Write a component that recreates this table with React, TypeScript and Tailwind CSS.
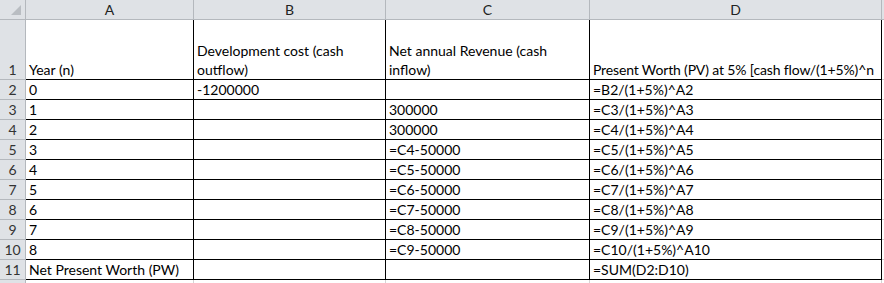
import React from "react";

const rows: string[][] = [
  ["0", "-1200000", "", "=B2/(1+5%)^A2"],
  ["1", "", "300000", "=C3/(1+5%)^A3"],
  ["2", "", "300000", "=C4/(1+5%)^A4"],
  ["3", "", "=C4-50000", "=C5/(1+5%)^A5"],
  ["4", "", "=C5-50000", "=C6/(1+5%)^A6"],
  ["5", "", "=C6-50000", "=C7/(1+5%)^A7"],
  ["6", "", "=C7-50000", "=C8/(1+5%)^A8"],
  ["7", "", "=C8-50000", "=C9/(1+5%)^A9"],
  ["8", "", "=C9-50000", "=C10/(1+5%)^A10"],
  ["Net Present Worth (PW)", "", "", "=SUM(D2:D10)"],
];

const hdr = "bg-[#dfe2e6] border-r border-b border-[#b4b8bd] flex items-center justify-center text-[#222] leading-none";
const rowHdr = "bg-[#dfe2e6] border-r border-b border-[#b4b8bd] flex items-end justify-center text-[#333] leading-[19px]";
const cell = "bg-white border-r border-b border-black flex items-end pl-[3px] whitespace-nowrap overflow-hidden leading-[19px]";

export default function App() {
  return (
    <div
      className="w-[884px] h-[283px] overflow-hidden bg-white text-[14px] text-black"
      style={{ fontFamily: "Lato, 'Open Sans', sans-serif" }}
    >
      <div className="grid grid-cols-[26px_168px_192px_204px_292px_1fr] grid-rows-[20px_60px_repeat(10,20px)_20px]">
        {/* header row */}
        <div className="bg-[#dfe2e6] border-r border-b border-[#b4b8bd] relative">
          <div className="absolute right-[4px] bottom-[4px] w-0 h-0 border-l-[10px] border-l-transparent border-b-[10px] border-b-[#b9bdc2]" />
        </div>
        <div className={hdr}>A</div>
        <div className={hdr}>B</div>
        <div className={hdr}>C</div>
        <div className={hdr}>D</div>
        <div className="bg-[#dfe2e6] border-b border-[#b4b8bd]" />

        {/* row 1 */}
        <div className={rowHdr}>1</div>
        <div className={cell}>Year (n)</div>
        <div className={cell}>
          <span>
            Development cost (cash
            <br />
            outflow)
          </span>
        </div>
        <div className={cell}>
          <span>
            Net annual Revenue (cash
            <br />
            inflow)
          </span>
        </div>
        <div className={cell + " tracking-[-0.15px]"}>Present Worth (PV) at 5% [cash flow/(1+5%)^n</div>
        <div className="border-b border-[#d4d4d4]" />

        {rows.map((r, i) => (
          <React.Fragment key={i}>
            <div className={rowHdr}>{i + 2}</div>
            {r.map((v, j) => (
              <div key={j} className={cell}>
                {v}
              </div>
            ))}
            <div className="border-b border-[#d4d4d4]" />
          </React.Fragment>
        ))}

        {/* partial row 12 */}
        <div className="bg-[#dfe2e6] border-r border-[#b4b8bd]" />
        <div className="border-r border-[#d4d4d4]" />
        <div className="border-r border-[#d4d4d4]" />
        <div className="border-r border-[#d4d4d4]" />
        <div className="border-r border-[#d4d4d4]" />
        <div />
      </div>
    </div>
  );
}
